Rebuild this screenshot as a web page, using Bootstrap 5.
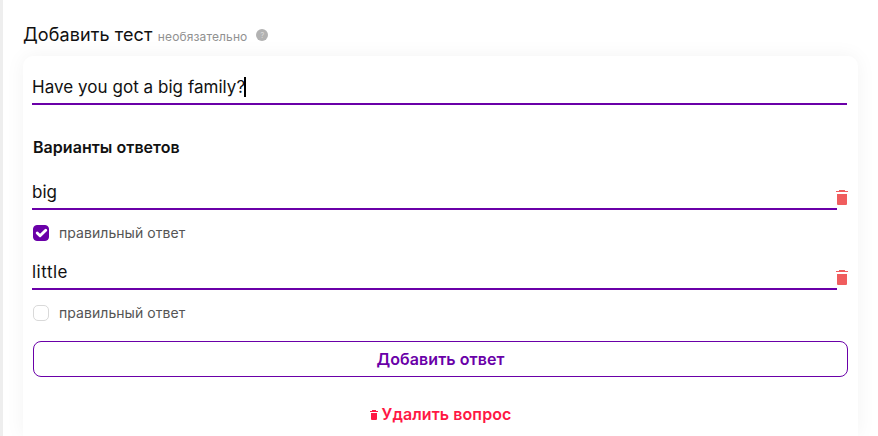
<!DOCTYPE html>
<html lang="ru">
<head>
    <meta charset="UTF-8">
    <meta name="viewport" content="width=device-width, initial-scale=1.0">
    <title>Добавить тест</title>
    <link rel="stylesheet" href="https://cdn.jsdelivr.net/npm/bootstrap@5.3.0/dist/css/bootstrap.min.css">
    <style>
        body {
            font-family: Inter, "Liberation Sans", sans-serif;
            color: #111;
            height: 436px;
            overflow: hidden;
            border-left: 3px solid #eee;
        }
        .test-editor { padding: 21px 20px 0; }
        .test-title { font-size: 18px; line-height: 28px; height: 35px; letter-spacing: .1px; }
        .optional { font-size: 12px; letter-spacing: .12px; color: #919191; margin-left: 5.4px; padding-top: 2px; }
        .help-dot {
            width: 12px; height: 12px; margin: 1px 0 0 9px;
            font-size: 8px; line-height: 12px; background: #b2b2b2; color: #d8d8d8;
        }
        .question-card {
            height: 380px;
            padding: 14px 10px 0 9px;
            border-radius: 10px 10px 0 0;
            box-shadow: 0 0 20px rgba(0, 0, 0, .05);
        }
        .line-field {
            height: 35px;
            padding-top: 1px;
            border-bottom: 2px solid #6a00a8;
            font-size: 17px;
            line-height: 33px;
            white-space: nowrap;
        }
        .question-field { margin-right: 1px; letter-spacing: .04px; }
        .caret { width: 2px; height: 20px; background: #000; margin-left: -1px; }
        .answers-title { font-size: 16px; font-weight: 600; line-height: 24px; letter-spacing: .04px; margin: 30px 0 16px 1px; }
        .answer { height: 80px; }
        .answer .line-field { width: 805px; flex-shrink: 0; }
        .spaced { letter-spacing: .5px; }
        .trash { margin: 15px 0 0 -1px; }
        .form-check.right-answer { margin: 15px 0 0 1px; padding: 0; min-height: 16px; }
        .right-answer .form-check-input {
            float: none; width: 16px; height: 16px; margin: 0; border: 1px solid #d9d9d9; border-radius: 5px;
        }
        .right-answer .form-check-input:checked {
            background-color: #6a00a8; border-color: #6a00a8; border-radius: 4px; background-size: 19px;
        }
        .right-answer label { font-size: 14px; line-height: 16px; letter-spacing: .06px; color: #555; margin-left: 10px; }
        .btn-answer {
            height: 36px; margin: 6px 0 0 1px; width: 815px; padding: 0;
            border: 1px solid #6a00a8; border-radius: 8px;
            color: #6a00a8; font-size: 16px; font-weight: 600; letter-spacing: .08px;
        }
        .btn-remove { padding: 0 0 0 1px; margin-top: 25px; color: #ff1744; font-size: 16px; font-weight: 600; letter-spacing: .08px; border: 0; }
        .btn-remove svg { margin: 1px 4px 0 0; }
    </style>
</head>
<body>

<div class="test-editor">
    <div class="test-title d-flex align-items-start">
        <span>Добавить тест</span>
        <span class="optional">необязательно</span>
        <span class="help-dot rounded-circle text-center align-self-start mt-2">?</span>
    </div>

    <div class="question-card bg-white">
        <div class="line-field question-field d-flex align-items-center">
            <span>Have you got a big family?</span><span class="caret"></span>
        </div>

        <div class="answers-title">Варианты ответов</div>

        <div class="answer">
            <div class="d-flex">
                <div class="line-field">big</div>
                <svg class="trash flex-shrink-0" width="13" height="16" viewBox="0 0 13 16" fill="#f05d5e">
                    <path d="M0 1h3V0h6v1h3v1H0zM1 4h10v10q0 1-1 1H2q-1 0-1-1z"/>
                </svg>
            </div>
            <div class="form-check right-answer d-flex align-items-center">
                <input class="form-check-input" type="checkbox" id="answer1" checked>
                <label for="answer1">правильный ответ</label>
            </div>
        </div>

        <div class="answer">
            <div class="d-flex">
                <div class="line-field spaced">little</div>
                <svg class="trash flex-shrink-0" width="13" height="16" viewBox="0 0 13 16" fill="#f05d5e">
                    <path d="M0 1h3V0h6v1h3v1H0zM1 4h10v10q0 1-1 1H2q-1 0-1-1z"/>
                </svg>
            </div>
            <div class="form-check right-answer d-flex align-items-center">
                <input class="form-check-input" type="checkbox" id="answer2">
                <label for="answer2">правильный ответ</label>
            </div>
        </div>

        <button class="btn btn-answer d-block" type="button">Добавить ответ</button>
        <button class="btn btn-remove d-flex align-items-center mx-auto" type="button">
            <svg width="8" height="10" viewBox="0 0 8 10" fill="#ff1744">
                <path d="M0 1h2V0h4v1h2v1H0zM1 3h6v6q0 1-1 1H2q-1 0-1-1z"/>
            </svg>
            Удалить вопрос
        </button>
    </div>
</div>

<script src="https://cdn.jsdelivr.net/npm/bootstrap@5.3.0/dist/js/bootstrap.bundle.min.js"></script>
</body>
</html>
